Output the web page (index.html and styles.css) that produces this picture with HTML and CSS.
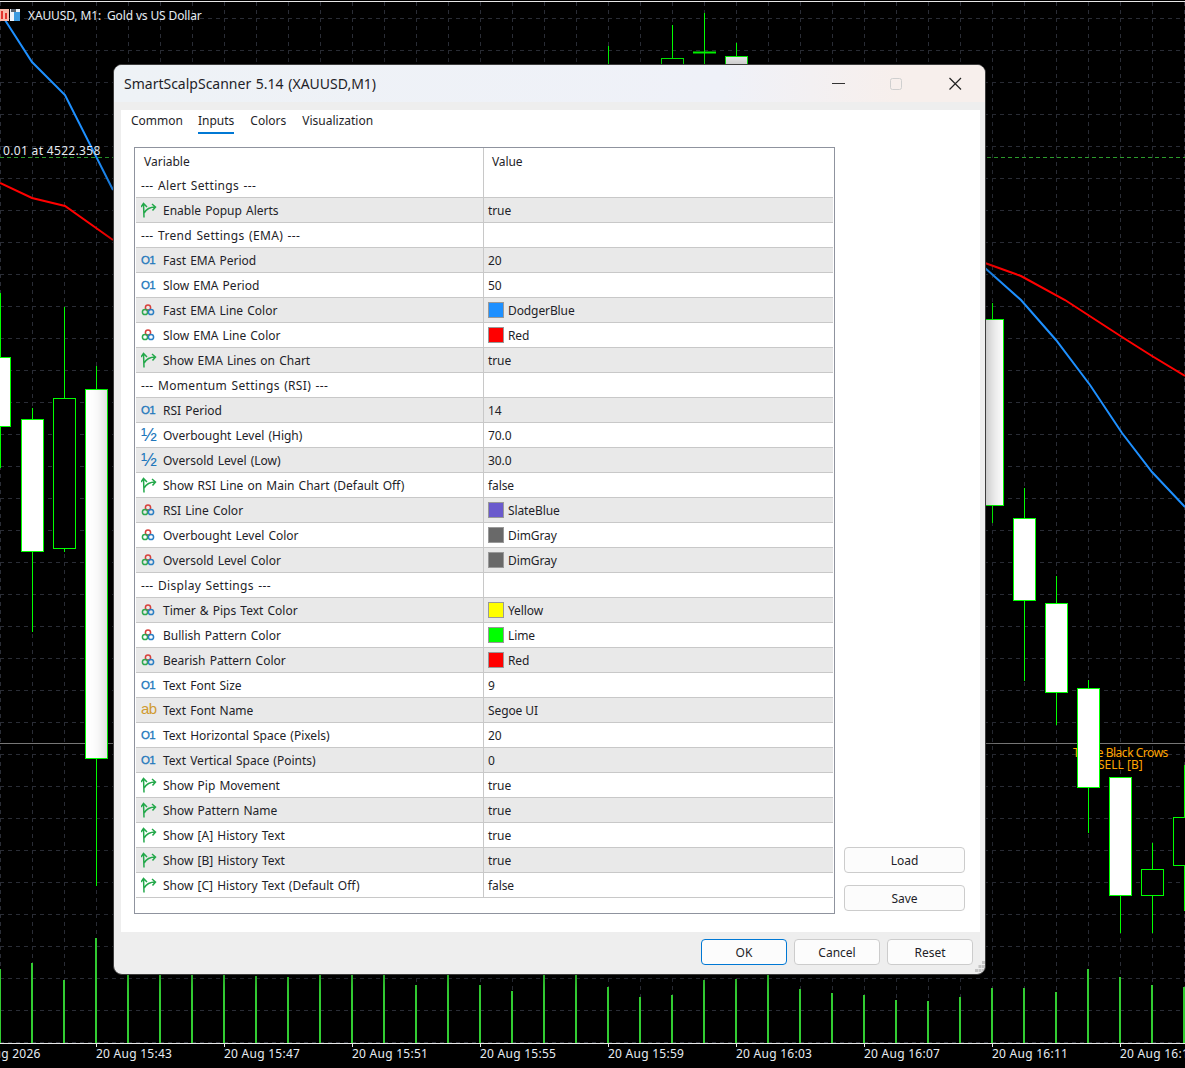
FILE: index.html
```html
<!DOCTYPE html>
<html lang="en">
<head>
    <meta charset="UTF-8">
    <title>SmartScalpScanner 5.14 (XAUUSD,M1)</title>
    <link rel="stylesheet" href="styles.css">
</head>
<body>
    <svg class="chart" width="1185" height="1068" viewBox="0 0 1185 1068">
        <defs>
            <pattern id="gridCell" width="32" height="32" patternUnits="userSpaceOnUse" y="18">
                <path class="grid-line" d="M0.5 0V32M0 0.5H32"/>
            </pattern>
        </defs>
        <rect x="0" y="2" width="1185" height="1041" fill="url(#gridCell)"/>
        <path class="top-line" d="M0 1.5H1185"/>
        <path class="position-line" d="M0 157.5H1185"/>
        <path class="price-line" d="M0 743.5H1185"/>

        <!-- volumes -->
        <path class="volume" d="M0 1043V969M32 1043V963M64 1043V980M96 1043V938M128 1043V970M160 1043V970M192 1043V970M224 1043V970M256 1043V976M288 1043V977M320 1043V970M352 1043V970M384 1043V970M416 1043V985M448 1043V975M480 1043V985M512 1043V991M544 1043V975M576 1043V975M608 1043V987M640 1043V997M672 1043V995M704 1043V980M736 1043V979M768 1043V975M800 1043V989M832 1043V993M864 1043V995M896 1043V1000M928 1043V1001M960 1043V997M992 1043V988M1024 1043V988M1056 1043V992M1088 1043V969M1120 1043V977M1152 1043V985M1184 1043V987"/>

        <!-- moving averages -->
        <path class="ema-red" d="M0 183L32 198L65 206L113 240M985 263L1021 276L1065 300L1122 337L1152 356L1185 376"/>
        <path class="ema-blue" d="M0 10L5 20L32 62L65 95L113 190M985 268L1021 300L1056 340L1090 385L1122 433L1152 472L1185 507"/>

        <text class="chart-text chart-title" x="28" y="20">XAUUSD, M1:  Gold vs US Dollar</text>
        <text class="chart-text position-label" x="3" y="155">0.01 at 4522.358</text>
        <text class="signal-text signal-name" x="1073" y="757">Three Black Crows</text>
        <text class="signal-text" x="1098" y="769">SELL [B]</text>

        <!-- candles -->
        <path class="wick" d="M0.5 293V468M32.5 408V632M64.5 307V398M64.5 548V552M96.5 366V886M608.5 46V66M672.5 25V58M704.5 13V66M736.5 43V56M992.5 303V523M1024.5 488V681M1056.5 576V725M1088.5 680V833M1120.5 777V933M1152.5 843V933M1184.5 765V911"/>
        <rect class="candle-up" x="-11.5" y="357.5" width="22" height="69"/>
        <rect class="candle-up" x="21.5" y="419.5" width="22" height="132"/>
        <rect class="candle-down" x="53.5" y="398.5" width="22" height="150"/>
        <rect class="candle-up" x="85.5" y="389.5" width="22" height="369"/>
        <rect class="candle-down" x="661.5" y="58.5" width="22" height="20"/>
        <path class="doji" d="M693 52.5H716"/>
        <rect class="candle-up" x="725.5" y="56.5" width="22" height="20"/>
        <rect class="candle-up" x="981.5" y="319.5" width="22" height="186"/>
        <rect class="candle-up" x="1013.5" y="518.5" width="22" height="82"/>
        <rect class="candle-up" x="1045.5" y="603.5" width="22" height="89"/>
        <rect class="candle-up" x="1077.5" y="688.5" width="22" height="99"/>
        <rect class="candle-up" x="1109.5" y="777.5" width="22" height="118"/>
        <rect class="candle-down" x="1141.5" y="869.5" width="22" height="26"/>
        <rect class="candle-down" x="1173.5" y="817.5" width="22" height="48"/>

        <!-- time axis -->
        <path class="axis-line" d="M0 1043.5H1185M96.5 1043V1047M224.5 1043V1047M352.5 1043V1047M480.5 1043V1047M608.5 1043V1047M736.5 1043V1047M864.5 1043V1047M992.5 1043V1047M1120.5 1043V1047"/>
        <text class="chart-text time-label" x="-32" y="1058">20 Aug 2026</text>
        <text class="chart-text time-label" x="96" y="1058">20 Aug 15:43</text>
        <text class="chart-text time-label" x="224" y="1058">20 Aug 15:47</text>
        <text class="chart-text time-label" x="352" y="1058">20 Aug 15:51</text>
        <text class="chart-text time-label" x="480" y="1058">20 Aug 15:55</text>
        <text class="chart-text time-label" x="608" y="1058">20 Aug 15:59</text>
        <text class="chart-text time-label" x="736" y="1058">20 Aug 16:03</text>
        <text class="chart-text time-label" x="864" y="1058">20 Aug 16:07</text>
        <text class="chart-text time-label" x="992" y="1058">20 Aug 16:11</text>
        <text class="chart-text time-label" x="1120" y="1058">20 Aug 16:15</text>

        <!-- chart logo -->
        <rect x="0" y="9" width="9" height="12" fill="#f7b9a8"/>
        <path d="M2 11V19M6 13V19" stroke="#e2342c" stroke-width="2"/>
        <path d="M10 9H20V21H10Z" fill="#eef4fa"/>
        <rect x="14" y="12" width="6" height="9" fill="#3d9be0"/>
        <rect x="11" y="9" width="5" height="3" fill="#5b6470"/>
    </svg>

    <svg class="icon-defs" width="0" height="0">
        <symbol id="iconBool" viewBox="0 0 16 16">
            <path d="M2.500 1.500L3 15.500M0 5L2.500 1.500L6 5M3.200 11C5 7.500 8 5 14.500 5M11 2L14.500 5L11.500 8.500" fill="none" stroke="#23a84a" stroke-width="1.5"/>
        </symbol>
        <symbol id="iconColor" viewBox="0 0 16 16">
            <circle cx="7" cy="5.500" r="2.600" fill="none" stroke="#d8403a" stroke-width="1.500"/>
            <circle cx="4" cy="10" r="2.600" fill="none" stroke="#2ea84f" stroke-width="1.500"/>
            <circle cx="10" cy="10" r="2.600" fill="none" stroke="#2b7fc4" stroke-width="1.500"/>
        </symbol>
    </svg>

    <div class="dialog">
        <div class="title-bar">
            <span class="title">SmartScalpScanner 5.14 (XAUUSD,M1)</span>
            <svg class="win-controls" width="130" height="14" viewBox="0 0 130 14">
                <path d="M0 6.500H13" stroke="#333" stroke-width="1.200"/>
                <rect x="58.500" y="1.500" width="11" height="11" rx="2" fill="none" stroke="#cfcfcf"/>
                <path d="M117.500 1L129 12.500M129 1L117.500 12.500" stroke="#222" stroke-width="1.200"/>
            </svg>
        </div>
        <div class="dialog-body">
            <div class="panel">
                <div class="tabs">
                    <span class="tab first">Common</span>
                    <span class="tab active">Inputs</span>
                    <span class="tab">Colors</span>
                    <span class="tab">Visualization</span>
                </div>
                <div class="panel-content">
                    <div class="table">
                        <div class="row header"><div class="cell name">Variable</div><div class="cell value">Value</div></div>
                        <div class="row-list">
                            <div class="row"><div class="cell name group">--- Alert Settings ---</div><div class="cell value"></div></div>
                            <div class="row"><div class="cell name"><svg class="icon"><use href="#iconBool"/></svg>Enable Popup Alerts</div><div class="cell value">true</div></div>
                            <div class="row"><div class="cell name group">--- Trend Settings (EMA) ---</div><div class="cell value"></div></div>
                            <div class="row"><div class="cell name"><span class="icon type-int">O1</span>Fast EMA Period</div><div class="cell value">20</div></div>
                            <div class="row"><div class="cell name"><span class="icon type-int">O1</span>Slow EMA Period</div><div class="cell value">50</div></div>
                            <div class="row"><div class="cell name"><svg class="icon"><use href="#iconColor"/></svg>Fast EMA Line Color</div><div class="cell value"><span class="swatch dodger"></span>DodgerBlue</div></div>
                            <div class="row"><div class="cell name"><svg class="icon"><use href="#iconColor"/></svg>Slow EMA Line Color</div><div class="cell value"><span class="swatch red"></span>Red</div></div>
                            <div class="row"><div class="cell name"><svg class="icon"><use href="#iconBool"/></svg>Show EMA Lines on Chart</div><div class="cell value">true</div></div>
                            <div class="row"><div class="cell name group">--- Momentum Settings (RSI) ---</div><div class="cell value"></div></div>
                            <div class="row"><div class="cell name"><span class="icon type-int">O1</span>RSI Period</div><div class="cell value">14</div></div>
                            <div class="row"><div class="cell name"><span class="icon type-float">½</span>Overbought Level (High)</div><div class="cell value">70.0</div></div>
                            <div class="row"><div class="cell name"><span class="icon type-float">½</span>Oversold Level (Low)</div><div class="cell value">30.0</div></div>
                            <div class="row"><div class="cell name"><svg class="icon"><use href="#iconBool"/></svg>Show RSI Line on Main Chart (Default Off)</div><div class="cell value">false</div></div>
                            <div class="row"><div class="cell name"><svg class="icon"><use href="#iconColor"/></svg>RSI Line Color</div><div class="cell value"><span class="swatch slate"></span>SlateBlue</div></div>
                            <div class="row"><div class="cell name"><svg class="icon"><use href="#iconColor"/></svg>Overbought Level Color</div><div class="cell value"><span class="swatch dim"></span>DimGray</div></div>
                            <div class="row"><div class="cell name"><svg class="icon"><use href="#iconColor"/></svg>Oversold Level Color</div><div class="cell value"><span class="swatch dim"></span>DimGray</div></div>
                            <div class="row"><div class="cell name group">--- Display Settings ---</div><div class="cell value"></div></div>
                            <div class="row"><div class="cell name"><svg class="icon"><use href="#iconColor"/></svg>Timer &amp; Pips Text Color</div><div class="cell value"><span class="swatch yellow"></span>Yellow</div></div>
                            <div class="row"><div class="cell name"><svg class="icon"><use href="#iconColor"/></svg>Bullish Pattern Color</div><div class="cell value"><span class="swatch lime"></span>Lime</div></div>
                            <div class="row"><div class="cell name"><svg class="icon"><use href="#iconColor"/></svg>Bearish Pattern Color</div><div class="cell value"><span class="swatch red"></span>Red</div></div>
                            <div class="row"><div class="cell name"><span class="icon type-int">O1</span>Text Font Size</div><div class="cell value">9</div></div>
                            <div class="row"><div class="cell name"><span class="icon type-str">ab</span>Text Font Name</div><div class="cell value">Segoe UI</div></div>
                            <div class="row"><div class="cell name"><span class="icon type-int">O1</span>Text Horizontal Space (Pixels)</div><div class="cell value">20</div></div>
                            <div class="row"><div class="cell name"><span class="icon type-int">O1</span>Text Vertical Space (Points)</div><div class="cell value">0</div></div>
                            <div class="row"><div class="cell name"><svg class="icon"><use href="#iconBool"/></svg>Show Pip Movement</div><div class="cell value">true</div></div>
                            <div class="row"><div class="cell name"><svg class="icon"><use href="#iconBool"/></svg>Show Pattern Name</div><div class="cell value">true</div></div>
                            <div class="row"><div class="cell name"><svg class="icon"><use href="#iconBool"/></svg>Show [A] History Text</div><div class="cell value">true</div></div>
                            <div class="row"><div class="cell name"><svg class="icon"><use href="#iconBool"/></svg>Show [B] History Text</div><div class="cell value">true</div></div>
                            <div class="row"><div class="cell name"><svg class="icon"><use href="#iconBool"/></svg>Show [C] History Text (Default Off)</div><div class="cell value">false</div></div>
                        </div>
                    </div>
                    <div class="side-buttons">
                        <button class="button side">Load</button>
                        <button class="button side">Save</button>
                    </div>
                </div>
            </div>
            <div class="footer">
                <button class="button primary">OK</button>
                <button class="button">Cancel</button>
                <button class="button">Reset</button>
                <svg class="grip" width="10" height="11" viewBox="0 0 10 11">
                    <path d="M7 0h3v3H7zM3.500 4h3v3h-3zM7 4h3v3H7zM0 8h3v3H0zM3.500 8h3v3h-3zM7 8h3v3H7z" fill="#c4c4c4"/>
                </svg>
            </div>
        </div>
    </div>
</body>
</html>
```

FILE: styles.css
```css
body {
    margin: 0;
    background-color: black;
    overflow: hidden;
    font-family: "Noto Sans", sans-serif;
    font-size: 12px;
    color: #1e1e28;
}

/* chart */
.chart {
    display: block;
}
.grid-line {
    fill: none;
    stroke: #2a2d36;
    stroke-dasharray: 4 4;
}
.top-line {
    stroke: #e8e8e8;
}
.position-line {
    stroke: #2c9c2c;
    stroke-dasharray: 4 3;
}
.price-line {
    stroke: #777;
}
.volume {
    fill: none;
    stroke: #32cd32;
    stroke-width: 2;
}
.ema-red {
    fill: none;
    stroke: red;
    stroke-width: 2;
}
.ema-blue {
    fill: none;
    stroke: #1e90ff;
    stroke-width: 2;
}
.wick {
    stroke: lime;
    fill: none;
}
.doji {
    stroke: lime;
    stroke-width: 2;
}
.candle-up {
    fill: white;
    stroke: lime;
}
.candle-down {
    fill: black;
    stroke: lime;
}
.axis-line {
    fill: none;
    stroke: #e8e8e8;
}
.chart-text {
    fill: #e6ecf2;
    font-size: 12px;
    white-space: pre;
}
.chart-title {
    letter-spacing: -0.13px;
}
.position-label {
    letter-spacing: 0.33px;
}
.time-label {
    letter-spacing: 0.25px;
}
.signal-text {
    fill: orange;
    font-size: 12px;
}
.signal-name {
    letter-spacing: -0.47px;
}

/* dialog window */
.dialog {
    position: absolute;
    left: 113px;
    top: 64px;
    width: 873px;
    height: 911px;
    box-sizing: border-box;
    border: 1px solid #3c3c3c;
    border-radius: 9px;
    overflow: hidden;
    background-color: #eeeeee;
    display: flex;
    flex-direction: column;
    box-shadow: 0 0 22px rgba(0, 0, 0, 0.4);
}
.title-bar {
    height: 37px;
    flex-shrink: 0;
    display: flex;
    align-items: center;
    justify-content: space-between;
    padding: 0 23px 0 10px;
    background: linear-gradient(90deg, #eef2f6 0%, #eff1f8 70%, #f7efec 90%);
}
.title {
    font-size: 14px;
    word-spacing: 1px;
}
.win-controls {
    display: block;
}
.dialog-body {
    flex: 1;
    display: flex;
    flex-direction: column;
    padding: 8px 5px 0 7px;
}
.panel {
    height: 822px;
    background-color: white;
    display: flex;
    flex-direction: column;
}

/* tabs */
.tabs {
    height: 24px;
    display: flex;
    gap: 16px;
    padding-left: 10px;
}
.tab {
    box-sizing: border-box;
    height: 24px;
    line-height: 22px;
    border-bottom: 2px solid transparent;
}
.tab.first {
    margin-right: -1px;
}
.tab.active {
    border-bottom-color: #0078d4;
}

/* inputs table */
.panel-content {
    flex: 1;
    display: flex;
    align-items: flex-start;
    padding: 13px 15px 0 13px;
}
.table {
    box-sizing: border-box;
    width: 701px;
    height: 767px;
    border: 1px solid #8f939e;
    padding: 0 1px;
}
.row {
    box-sizing: border-box;
    height: 25px;
    display: grid;
    grid-template-columns: 348px 1fr;
    border-bottom: 1px solid #c8c8c8;
}
.row.header {
    border-bottom: none;
}
.row-list .row:nth-child(even) {
    background-color: #e9e9e9;
}
.cell {
    display: flex;
    align-items: center;
    white-space: nowrap;
}
.cell.name {
    padding-left: 5px;
    border-right: 1px solid #c8c8c8;
    word-spacing: 1px;
}
.cell.group {
    letter-spacing: 0.32px;
}
.cell.value {
    padding-left: 4px;
    letter-spacing: -0.1px;
}
.header .cell.name,
.header .cell.value {
    padding: 2px 0 0 8px;
}
.icon {
    width: 16px;
    height: 16px;
    margin-right: 6px;
    flex-shrink: 0;
}
.type-int {
    color: #2277bb;
    font-family: "Liberation Sans", sans-serif;
    font-size: 11.5px;
    line-height: 16px;
    letter-spacing: -0.8px;
    -webkit-text-stroke: 0.3px #2277bb;
}
.type-float {
    color: #2277bb;
    font-family: "Liberation Sans", sans-serif;
    font-size: 19px;
    line-height: 16px;
}
.type-str {
    color: #d09a30;
    font-family: "Liberation Sans", sans-serif;
    font-size: 15px;
    line-height: 14px;
    letter-spacing: -0.5px;
}
.swatch {
    box-sizing: border-box;
    width: 16px;
    height: 16px;
    margin-right: 4px;
    border: 1px solid #999;
}
.dodger { background-color: dodgerblue; }
.red { background-color: red; }
.slate { background-color: slateblue; }
.dim { background-color: dimgray; }
.yellow { background-color: yellow; }
.lime { background-color: lime; }

/* buttons */
.icon-defs {
    position: absolute;
}
.side-buttons {
    box-sizing: border-box;
    height: 767px;
    display: flex;
    flex-direction: column;
    justify-content: flex-end;
    gap: 12px;
    margin-left: 9px;
    padding-bottom: 3px;
}
.button {
    box-sizing: border-box;
    width: 86px;
    height: 26px;
    padding: 0;
    background-color: #fcfcfc;
    border: 1px solid #cccccc;
    border-radius: 4px;
    font-family: inherit;
    font-size: 12px;
    color: inherit;
}
.button.side {
    width: 121px;
}
.button.primary {
    border-color: #0078d4;
}
.footer {
    position: relative;
    flex: 1;
    display: flex;
    justify-content: flex-end;
    gap: 7px;
    padding: 7px 7px 0 0;
}
.grip {
    position: absolute;
    right: -5px;
    bottom: 2px;
}
```
